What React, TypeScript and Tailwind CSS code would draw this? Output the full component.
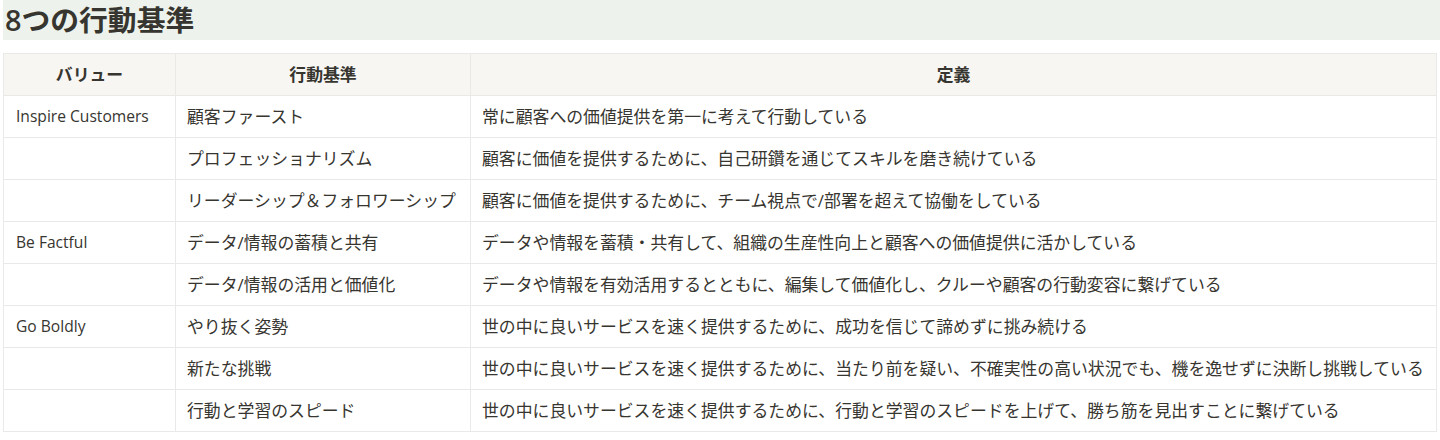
const rows = [
	{ value: 'Inspire Customers', action: '顧客ファースト', def: '常に顧客への価値提供を第一に考えて行動している' },
	{ value: '', action: 'プロフェッショナリズム', def: '顧客に価値を提供するために、自己研鑽を通じてスキルを磨き続けている' },
	{ value: '', action: 'リーダーシップ＆フォロワーシップ', def: '顧客に価値を提供するために、チーム視点で/部署を超えて協働をしている' },
	{ value: 'Be Factful', action: 'データ/情報の蓄積と共有', def: 'データや情報を蓄積・共有して、組織の生産性向上と顧客への価値提供に活かしている' },
	{ value: '', action: 'データ/情報の活用と価値化', def: 'データや情報を有効活用するとともに、編集して価値化し、クルーや顧客の行動変容に繋げている' },
	{ value: 'Go Boldly', action: 'やり抜く姿勢', def: '世の中に良いサービスを速く提供するために、成功を信じて諦めずに挑み続ける' },
	{ value: '', action: '新たな挑戦', def: '世の中に良いサービスを速く提供するために、当たり前を疑い、不確実性の高い状況でも、機を逸せずに決断し挑戦している' },
	{ value: '', action: '行動と学習のスピード', def: '世の中に良いサービスを速く提供するために、行動と学習のスピードを上げて、勝ち筋を見出すことに繋げている' },
];

const App = () => {
	return (
		<div
			className="w-[1440px] h-[440px] bg-white text-[#37352f]"
			style={{ fontFamily: '"Open Sans", "Noto Sans CJK JP", sans-serif' }}
		>
			<div className="ml-[3px] h-[40px] bg-[#edf3ec] flex items-center pl-[2px]">
				<h1 className="text-[28.8px] font-semibold leading-none text-[#37352f]">8つの行動基準</h1>
			</div>

			<table className="mt-[13px] ml-[3px] w-[1434px] table-fixed border-collapse text-[16.85px]">
				<colgroup>
					<col className="w-[172px]" />
					<col className="w-[295px]" />
					<col />
				</colgroup>
				<thead>
					<tr className="h-[42px] bg-[#f7f6f3]">
						<th className="border border-[#e9e9e7] font-bold">バリュー</th>
						<th className="border border-[#e9e9e7] font-bold">行動基準</th>
						<th className="border border-[#e9e9e7] font-bold">定義</th>
					</tr>
				</thead>
				<tbody>
					{rows.map((r, i) => (
						<tr key={i} className="h-[42px]">
							<td className="border border-[#e9e9e7] pl-[12px] whitespace-nowrap text-[15.6px]">{r.value}</td>
							<td className="border border-[#e9e9e7] pl-[11px] whitespace-nowrap">{r.action}</td>
							<td className="border border-[#e9e9e7] pl-[11px] whitespace-nowrap">{r.def}</td>
						</tr>
					))}
				</tbody>
			</table>
		</div>
	);
};

export default App;
